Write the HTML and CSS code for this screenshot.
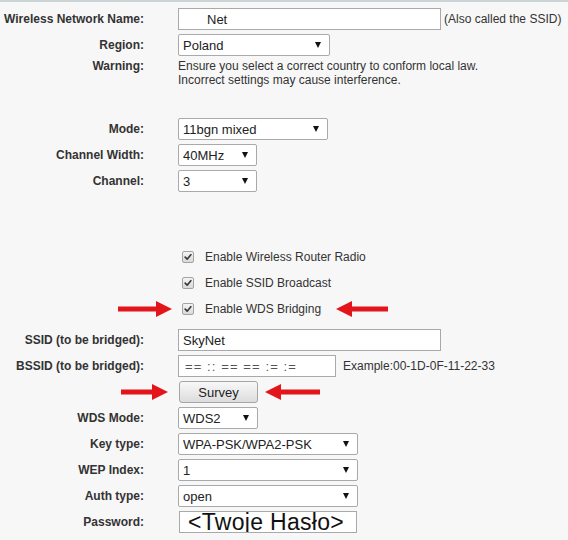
FILE: index.html
```html
<!DOCTYPE html>
<html lang="en">
<head>
    <meta charset="UTF-8">
    <meta name="viewport" content="width=device-width, initial-scale=1.0">
    <title>Wireless Settings</title>
    <link rel="stylesheet" href="styles.css">
</head>
<body>
    <form class="settings" autocomplete="off">
        <div class="row">
            <label class="lbl">Wireless Network Name:</label>
            <div class="field">
                <input type="text" class="txt ssid-name" value="Net">
                <span class="hint">(Also called the SSID)</span>
            </div>
        </div>
        <div class="row">
            <label class="lbl">Region:</label>
            <div class="field">
                <span class="sel w-region"><select><option>Poland</option></select></span>
            </div>
        </div>
        <div class="row warn">
            <label class="lbl">Warning:</label>
            <div class="field note">
                Ensure you select a correct country to conform local law.<br>
                Incorrect settings may cause interference.
            </div>
        </div>

        <div class="row">
            <label class="lbl">Mode:</label>
            <div class="field">
                <span class="sel w-mode"><select><option>11bgn mixed</option></select></span>
            </div>
        </div>
        <div class="row">
            <label class="lbl">Channel Width:</label>
            <div class="field">
                <span class="sel w-short"><select><option>40MHz</option></select></span>
            </div>
        </div>
        <div class="row">
            <label class="lbl">Channel:</label>
            <div class="field">
                <span class="sel w-short"><select><option>3</option></select></span>
            </div>
        </div>

        <div class="checks">
            <div class="row">
                <span class="lbl"></span>
                <label class="field check"><span class="box"><svg viewBox="0 0 12 12"><path d="M2.6 6.2 L5 8.6 L9.4 3.2" /></svg></span>Enable Wireless Router Radio</label>
            </div>
            <div class="row">
                <span class="lbl"></span>
                <label class="field check"><span class="box"><svg viewBox="0 0 12 12"><path d="M2.6 6.2 L5 8.6 L9.4 3.2" /></svg></span>Enable SSID Broadcast</label>
            </div>
            <div class="row marked">
                <span class="lbl"></span>
                <label class="field check"><span class="box"><svg viewBox="0 0 12 12"><path d="M2.6 6.2 L5 8.6 L9.4 3.2" /></svg></span>Enable WDS Bridging</label>
                <svg class="arrow wds-in" viewBox="0 0 54 16"><polygon points="0,5.5 38,5.5 38,0 54,8 38,16 38,10.5 0,10.5" /></svg>
                <svg class="arrow wds-out" viewBox="0 0 52 16"><polygon points="52,5.5 16,5.5 16,0 0,8 16,16 16,10.5 52,10.5" /></svg>
            </div>
        </div>

        <div class="row">
            <label class="lbl">SSID (to be bridged):</label>
            <div class="field">
                <input type="text" class="txt wide" value="SkyNet">
            </div>
        </div>
        <div class="row">
            <label class="lbl">BSSID (to be bridged):</label>
            <div class="field">
                <input type="text" class="txt bssid" value="== :: == == := :=">
                <span class="hint example">Example:00-1D-0F-11-22-33</span>
            </div>
        </div>
        <div class="row marked">
            <span class="lbl"></span>
            <div class="field">
                <button type="button" class="btn">Survey</button>
            </div>
            <svg class="arrow survey-in" viewBox="0 0 47 16"><polygon points="0,5.5 31,5.5 31,0 47,8 31,16 31,10.5 0,10.5" /></svg>
            <svg class="arrow survey-out" viewBox="0 0 55 16"><polygon points="55,5.5 16,5.5 16,0 0,8 16,16 16,10.5 55,10.5" /></svg>
        </div>
        <div class="row">
            <label class="lbl">WDS Mode:</label>
            <div class="field">
                <span class="sel w-wds"><select><option>WDS2</option></select></span>
            </div>
        </div>
        <div class="row">
            <label class="lbl">Key type:</label>
            <div class="field">
                <span class="sel w-key"><select><option>WPA-PSK/WPA2-PSK</option></select></span>
            </div>
        </div>
        <div class="row">
            <label class="lbl">WEP Index:</label>
            <div class="field">
                <span class="sel w-key"><select><option>1</option></select></span>
            </div>
        </div>
        <div class="row">
            <label class="lbl">Auth type:</label>
            <div class="field">
                <span class="sel w-key"><select><option>open</option></select></span>
            </div>
        </div>
        <div class="row">
            <label class="lbl">Password:</label>
            <div class="field">
                <input type="text" class="txt pass" value="<Twoje Hasło>">
            </div>
        </div>
    </form>
</body>
</html>
```

FILE: styles.css
```css
body { margin: 0; background: #f7f7f7; border-top: 2px solid #cad4d7; font-family: "Liberation Sans", Arial, sans-serif; font-size: 12px; color: #333; }
.settings { padding-top: 4px; }

/* one label/field line */
.row { display: flex; align-items: center; min-height: 26px; position: relative; }
.lbl { width: 144px; flex: none; margin-right: 34px; text-align: right; font-weight: bold; color: #333; }
.field { display: flex; align-items: center; }

.row.warn { align-items: flex-start; padding: 1px 0 29px; line-height: 14px; }
.note { display: block; color: #333; }

.checks { margin: 50px 0 5px; }

/* text boxes */
.txt { box-sizing: border-box; height: 22px; margin: 0; padding: 0 4px; border: 1px solid #a9a9a9; background: #fff; font: 13px "Liberation Sans", Arial, sans-serif; color: #222; outline: none; }
.ssid-name { width: 263px; padding-left: 28px; }
.wide { width: 263px; }
.bssid { width: 158px; padding-left: 6px; letter-spacing: 1.1px; color: #555; }
.pass { width: 178px; margin-left: 1px; padding: 0 0 0 8px; font-size: 23px; letter-spacing: 0.3px; color: #111; line-height: 20px; }
.hint { margin-left: 3px; }
.hint.example { margin-left: 7px; }

/* drop-downs with the small black triangle */
.sel { position: relative; display: inline-block; }
.sel select { appearance: none; -webkit-appearance: none; box-sizing: border-box; width: 100%; height: 22px; margin: 0; padding: 0 4px; border: 1px solid #a9a9a9; border-radius: 2px; background: #fff; font: 13px "Liberation Sans", Arial, sans-serif; color: #222; outline: none; }
.sel::after { content: ""; position: absolute; right: 9px; top: 8px; border-left: 3.5px solid transparent; border-right: 3.5px solid transparent; border-top: 6px solid #111; pointer-events: none; }
.w-region { width: 152px; }
.w-mode { width: 150px; }
.w-short { width: 79px; }
.w-wds { width: 80px; }
.w-key { width: 180px; }

/* checkboxes */
.check { cursor: default; }
.box { box-sizing: border-box; width: 12px; height: 12px; margin: 0 11px 0 4px; border: 1px solid #a3a3a3; border-radius: 2px; background: linear-gradient(#f4f4f4, #d9d9d9); display: flex; }
.box svg { width: 10px; height: 10px; }
.box path { fill: none; stroke: #3a3a3a; stroke-width: 2; stroke-linecap: round; stroke-linejoin: round; }

.btn { box-sizing: border-box; width: 79px; height: 22px; margin: 0 0 0 1px; padding: 0; border: 1px solid #a6a6a6; border-radius: 3px; background: linear-gradient(#f8f8f8, #dcdcdc); font: 13px "Liberation Sans", Arial, sans-serif; color: #222; }

/* red pointer arrows */
.arrow { position: absolute; height: 16px; fill: #e3151b; top: 50%; margin-top: -8px; }
.wds-in { left: 118px; width: 54px; }
.wds-out { left: 336px; width: 52px; }
.survey-in { left: 121px; width: 47px; }
.survey-out { left: 265px; width: 55px; }
```
